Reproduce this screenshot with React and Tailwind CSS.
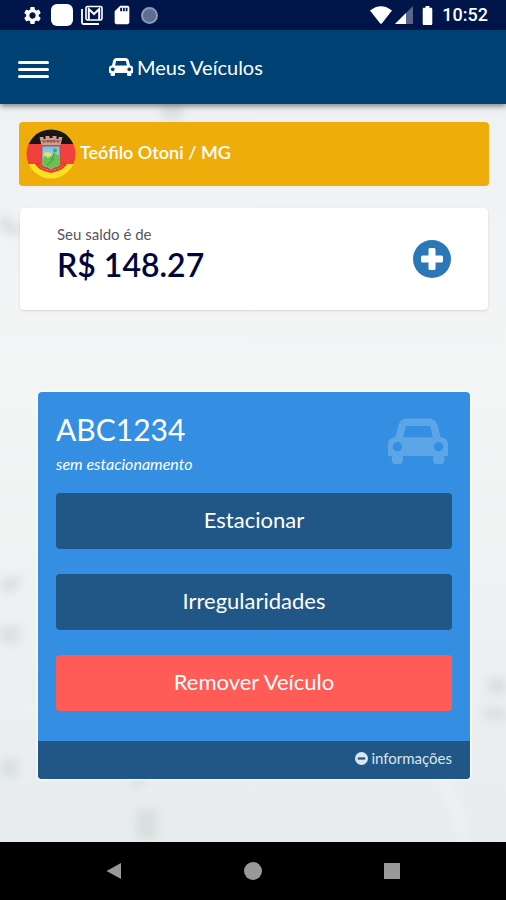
import { MdBatteryFull, MdSdCard, MdSettings } from 'react-icons/md'

const ACTIONS = [
  { label: 'Estacionar',      className: 'bg-[#205787]' },
  { label: 'Irregularidades', className: 'bg-[#205787]' },
  { label: 'Remover Veículo', className: 'bg-[#ff5b57]' },
]

function CarIcon({ className }) {
  return (
    <svg viewBox="0 128 2048 1536" fill="currentColor" className={className} aria-hidden="true">
      <path d="M480 1088q0-66-47-113t-113-47-113 47-47 113 47 113 113 47 113-47 47-113zm36-320h1016l-89-357q-2-8-14-17.5t-21-9.5h-768q-9 0-21 9.5t-14 17.5zm1372 320q0-66-47-113t-113-47-113 47-47 113 47 113 113 47 113-47 47-113zm160-96v384q0 14-9 23t-23 9h-96v128q0 80-56 136t-136 56-136-56-56-136v-128h-1024v128q0 80-56 136t-136 56-136-56-56-136v-128h-96q-14 0-23-9t-9-23v-384q0-93 65.500-158.500t158.500-65.500h28l105-419q23-94 104-157.500t179-63.500h768q98 0 179 63.500t104 157.500l105 419h28q93 0 158.500 65.500t65.500 158.500z" />
    </svg>
  )
}

function MailStackIcon() {
  return (
    <svg viewBox="0 0 22 20" className="h-5 w-[22px]" fill="none" stroke="#fff" aria-hidden="true">
      <path d="M1 4v13.5q0 1.500 1.500 1.500H18" strokeWidth="1.800" />
      <rect x="5" y="1.500" width="16" height="13.500" rx="1.500" strokeWidth="1.600" />
      <path d="M7.800 15V4l5.200 5 5.200-5v11" strokeWidth="2" />
    </svg>
  )
}

function WifiIcon() {
  return (
    <svg viewBox="0 0 22 18" className="h-[18px] w-[22px]" fill="#fff" aria-hidden="true">
      <path d="M0 4.600Q11-4 22 4.600L12 17.200q-1 1.200-2 0z" />
    </svg>
  )
}

function SignalIcon() {
  return (
    <svg viewBox="0 0 18 18" className="h-[18px] w-[18px]" fill="#fff" aria-hidden="true">
      <path d="M0 18 18 0v18z" opacity=".35" />
      <path d="M0 18 11 7v11z" />
    </svg>
  )
}

function CityCrest() {
  return (
    <svg viewBox="0 0 50 50" className="size-[50px] shrink-0" role="img" aria-label="Brasão de Teófilo Otoni">
      <defs>
        <clipPath id="crest-round"><circle cx="25" cy="25" r="24.500" /></clipPath>
        <linearGradient id="crest-sky" x2="0" y2="1">
          <stop stopColor="#7dbbe8" />
          <stop offset="1" stopColor="#c4e2ee" />
        </linearGradient>
      </defs>
      <g clipPath="url(#crest-round)">
        <path d="M0 0h50v15H0z" fill="#171717" />
        <path d="M0 15h50v20H0z" fill="#f2403c" />
        <path d="M0 35h50v15H0z" fill="#fbe11f" />
      </g>
      <path d="M9 35q3 5 9 7l7 2 7-2q6-2 9-7l-3-2q-5 5-13 5t-13-5z" fill="#e63a2c" />
      <path d="M12 36q5 5 13 5t13-5" fill="none" stroke="#f7a27a" strokeWidth=".8" strokeDasharray="1.500 1" />
      <path d="M13.500 8h4v2h2V7h4v2h3V7h4v3h2V8h4l-2 8H15.500z" fill="#d39c8a" />
      <path d="M16 12h18M18 14v-2M22 14v-3M25 14v-3M28 14v-3M32 14v-2" stroke="#74352e" strokeWidth=".8" />
      <path d="M16 17h18v17q0 4-5 4.500l-4 2-4-2q-5-.5-5-4.500z" fill="url(#crest-sky)" stroke="#8e5b52" strokeWidth=".8" />
      <path d="M16.500 30l4-5 4 3 4-4 5 3v7q0 4-5 4l-3.500 2-3.500-2q-5 0-5-4z" fill="#6cc04f" />
      <path d="M17 25q4-4 9 0l-4 4z" fill="#dbe66a" />
      <path d="M25 31q3-3 3-7M21 36l7-6" fill="none" stroke="#35905a" strokeWidth="1" />
      <circle cx="29" cy="21.500" r="2" fill="#4ba94c" />
    </svg>
  )
}

// Soft, washed-out street photo behind the content
function Backdrop() {
  return (
    <svg
      viewBox="0 0 506 738"
      preserveAspectRatio="none"
      className="pointer-events-none absolute inset-0 -z-10 size-full"
      aria-hidden="true"
    >
      <defs>
        <filter id="soft" x="-50%" y="-50%" width="200%" height="200%"><feGaussianBlur stdDeviation="5" /></filter>
        <linearGradient id="wash" x2="0" y2="1">
          <stop stopColor="#eff1f4" />
          <stop offset=".38" stopColor="#f4f5f5" />
          <stop offset="1" stopColor="#e8ecee" />
        </linearGradient>
      </defs>
      <path d="M0 0h506v738H0z" fill="url(#wash)" />
      <g filter="url(#soft)">
        <path d="M162 0h20v16h-20zM0 108l20 14v12L0 126z" fill="#dcdfe2" />
        <path d="M0 474l24-2-10 16H0zM0 522h20v18H0z" fill="#dde0e2" />
        <path d="M0 655h18v18H0zM130 675l22-5-18 18zM136 704h22v32h-22z" fill="#d9dfdf" />
        <path d="M488 574h18v16h-18zM484 604h22v12h-22z" fill="#d9dfe0" />
        <path d="M0 610q30 0 60-14M440 674q20 30 24 64" stroke="#eff2f3" strokeWidth="8" fill="none" />
      </g>
    </svg>
  )
}

function StatusBar() {
  return (
    <div className="flex h-[30px] items-center justify-between bg-[#00154a] pr-[18px] pl-[22px] text-white">
      <div className="flex items-center gap-2">
        <MdSettings size={21} />
        <span className="size-[22px] rounded-md bg-white" />
        <MailStackIcon />
        <MdSdCard size={22} />
        <span className="size-[17px] rounded-full border-2 border-[#8d9bb2] bg-[#5c6f91]" />
      </div>
      <div className="flex items-center gap-[3px]">
        <WifiIcon />
        <SignalIcon />
        <MdBatteryFull size={23} />
        <time className="font-[Roboto,sans-serif] text-lg font-medium">10:52</time>
      </div>
    </div>
  )
}

function Header() {
  return (
    <header className="relative z-10 flex h-[74px] items-center bg-[#004173] px-[18px] text-white shadow-[0_2px_6px_rgba(0,0,0,0.5)]">
      <button aria-label="Menu" className="mt-1 flex w-[31px] flex-col gap-1">
        <span className="h-[3px] rounded-sm bg-white" />
        <span className="h-[3px] rounded-sm bg-white" />
        <span className="h-[3px] rounded-sm bg-white" />
      </button>
      <h1 className="ml-[60px] flex items-center gap-1 text-xl">
        <CarIcon className="h-[18px] w-6" />
        Meus Veículos
      </h1>
    </header>
  )
}

function BalanceCard() {
  return (
    <section className="mx-px mt-[22px] flex h-[102px] items-center justify-between rounded bg-white pr-9 pl-[37px] shadow-sm">
      <div className="pb-2">
        <p className="text-[15px] leading-5 text-[#55555c]">Seu saldo é de</p>
        <p className="text-[32px] leading-[42px] font-semibold text-[#00063c]">R$ 148.27</p>
      </div>
      <button aria-label="Adicionar saldo">
        <svg viewBox="0 0 40 40" className="size-10" aria-hidden="true">
          <circle cx="20" cy="20" r="19" fill="#2b77b8" />
          <path d="M18 9h4q1.500 0 1.500 1.500v6h6q1.500 0 1.500 1.500v4q0 1.500-1.500 1.500h-6v6q0 1.500-1.500 1.500h-4q-1.500 0-1.500-1.500v-6h-6q-1.500 0-1.500-1.500v-4q0-1.500 1.500-1.500h6v-6q0-1.500 1.500-1.500z" fill="#fff" />
        </svg>
      </button>
    </section>
  )
}

function VehicleCard() {
  return (
    <article className="mx-[19px] mt-[82px] overflow-hidden rounded bg-[#348fe2] text-white shadow-[0_0_2px_1px_#ffffff]">
      <div className="px-[18px] pt-[18px] pb-[30px]">
        <div className="flex items-start justify-between">
          <div>
            <h2 className="text-3xl leading-[38px]">ABC1234</h2>
            <p className="mt-1 text-base leading-6 italic">sem estacionamento</p>
          </div>
          <CarIcon className="mt-2 mr-1 h-[46px] w-[60px] text-white/20" />
        </div>
        <div className="mt-[17px] flex flex-col gap-[25px]">
          {ACTIONS.map(({ label, className }) => (
            <button key={label} className={`h-14 rounded pb-1 text-[22px] ${className}`}>
              {label}
            </button>
          ))}
        </div>
      </div>
      <footer className="flex h-[38px] justify-end bg-[#205787] px-[18px]">
        <button className="flex items-center gap-[3px] pb-1 text-[15px] text-[#dde6ee]">
          <svg viewBox="0 0 14 14" className="size-[13px]" aria-hidden="true">
            <circle cx="7" cy="7" r="7" fill="currentColor" />
            <path d="M3 7h8" stroke="#205787" strokeWidth="2.400" />
          </svg>
          informações
        </button>
      </footer>
    </article>
  )
}

function NavBar() {
  return (
    <nav className="flex h-[58px] items-center justify-center gap-[121px] bg-black">
      <button aria-label="Voltar">
        <svg viewBox="0 0 18 18" className="size-[18px]" fill="#999"><path d="M1.500 9 16 1v16z" /></svg>
      </button>
      <button aria-label="Início" className="size-[18px] rounded-full bg-[#999]" />
      <button aria-label="Recentes" className="flex size-[18px] items-center justify-center">
        <span className="size-4 bg-[#999]" />
      </button>
    </nav>
  )
}

export default function App() {
  return (
    <div className="flex min-h-screen flex-col font-[Lato,sans-serif]">
      <StatusBar />
      <Header />
      <main className="relative isolate flex-1 pt-[18px] pr-[17px] pb-[61px] pl-[19px]">
        <Backdrop />
        <div className="flex h-16 items-center gap-1 rounded bg-[#efad0c] px-[7px] text-white">
          <CityCrest />
          <span className="pb-1 text-lg font-semibold">Teófilo Otoni / MG</span>
        </div>
        <BalanceCard />
        <VehicleCard />
      </main>
      <NavBar />
    </div>
  )
}
